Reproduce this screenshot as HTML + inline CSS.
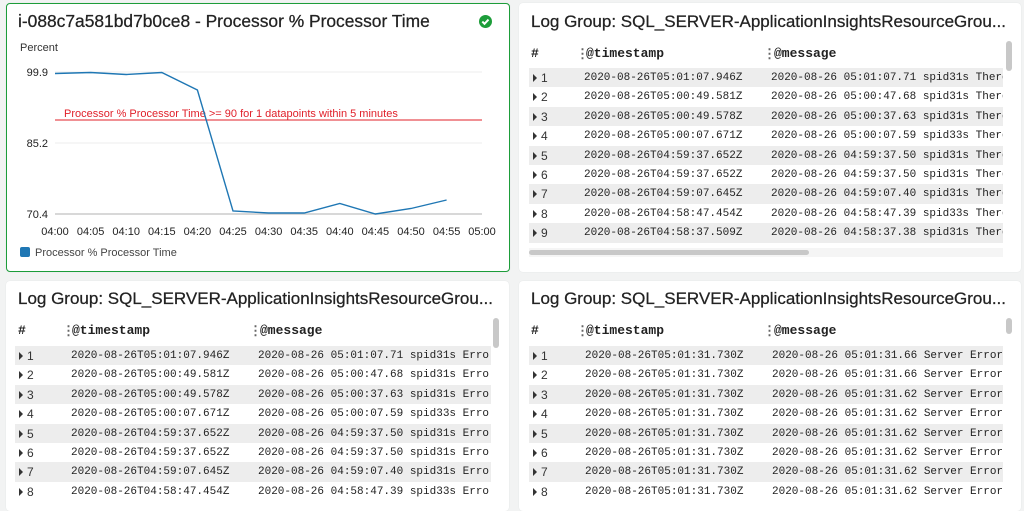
<!DOCTYPE html>
<html><head><style>
*{margin:0;padding:0;box-sizing:border-box}
body{width:1024px;height:505px;background:#f2f3f3;position:relative;overflow:hidden;font-family:"Liberation Sans",sans-serif;color:#16191f}
.p{position:absolute;background:#fff;border-radius:4px;box-shadow:0 0 1px #d5dbdb}
.t{position:absolute;font-size:17px;color:#222;white-space:nowrap;-webkit-text-stroke:0.25px #222}
.tb{position:absolute;overflow:hidden;font-family:"Liberation Mono",monospace;font-size:11px;color:#222}
.r{position:absolute;left:0;height:19.4px;width:100%}
.r.g{background:#ededed}
.r span{position:absolute;top:4px;white-space:nowrap}
.r span.n{font-family:"Liberation Sans",sans-serif;font-size:12px;top:3px;color:#333}
.h{position:absolute;font-weight:bold;font-size:13px;white-space:nowrap;font-family:"Liberation Mono",monospace;color:#222}
.d{position:absolute;font-weight:bold;font-size:13px;color:#666}
.ar{display:inline-block;width:0;height:0;border-left:4px solid #333;border-top:4px solid transparent;border-bottom:4px solid transparent;margin-right:4px;vertical-align:0px}
</style></head><body>

<div class="p" style="left:6px;top:3px;width:504px;height:269px;border:1.5px solid #1d9d3a"></div>
<div class="t" style="left:18px;top:11px;font-size:17.4px">i-088c7a581bd7b0ce8 - Processor % Processor Time</div>
<svg style="position:absolute;left:478px;top:14px" width="15" height="15"><circle cx="7.5" cy="7.5" r="6.5" fill="#1d9d3a"/><path d="M4.3 7.6l2.2 2.2 4-4.2" stroke="#fff" stroke-width="2" fill="none"/></svg>
<svg style="position:absolute;left:0;top:0" width="512" height="270" font-family="Liberation Sans" font-size="11">
<text x="20" y="51" fill="#333" font-size="11">Percent</text>
<line x1="55" y1="72" x2="482" y2="72" stroke="#eee"/>
<line x1="55" y1="143" x2="482" y2="143" stroke="#eee"/>
<line x1="55" y1="214" x2="482" y2="214" stroke="#ccc" stroke-width="1.5"/>
<text x="48" y="76" text-anchor="end" fill="#222">99.9</text>
<text x="48" y="147" text-anchor="end" fill="#222">85.2</text>
<text x="48" y="218" text-anchor="end" fill="#222">70.4</text>
<line x1="55" y1="120" x2="482" y2="120" stroke="#e0202a" stroke-width="1"/>
<text x="64" y="117" fill="#e0202a">Processor % Processor Time &gt;= 90 for 1 datapoints within 5 minutes</text>
<polyline fill="none" stroke="#1f77b4" stroke-width="1.4" points="55,73.5 90.6,72.5 126.2,74.5 161.8,72.5 197.4,90 233,211 268.6,213 304.2,213 339.8,203.5 375.4,214 411,208.5 446.6,200"/>
<g fill="#222" text-anchor="middle">
<text x="55" y="235">04:00</text><text x="90.6" y="235">04:05</text><text x="126.2" y="235">04:10</text><text x="161.8" y="235">04:15</text><text x="197.4" y="235">04:20</text><text x="233" y="235">04:25</text><text x="268.6" y="235">04:30</text><text x="304.2" y="235">04:35</text><text x="339.8" y="235">04:40</text><text x="375.4" y="235">04:45</text><text x="411" y="235">04:50</text><text x="446.6" y="235">04:55</text><text x="482" y="235">05:00</text>
</g>
<rect x="20" y="247" width="10" height="10" rx="2" fill="#1f77b4"/>
<text x="35" y="256" fill="#444">Processor % Processor Time</text>
</svg>

<div class="p" style="left:519px;top:3px;width:502px;height:269px"></div>
<div class="p" style="left:6px;top:281px;width:503px;height:230px"></div>
<div class="p" style="left:519px;top:281px;width:502px;height:230px"></div>

<div class="t" style="left:531px;top:12px">Log Group: SQL_SERVER-ApplicationInsightsResourceGrou...</div>
<div class="t" style="left:18px;top:289px">Log Group: SQL_SERVER-ApplicationInsightsResourceGrou...</div>
<div class="t" style="left:531px;top:289px">Log Group: SQL_SERVER-ApplicationInsightsResourceGrou...</div>

<!-- top right table -->
<div class="h" style="left:531px;top:46px">#</div>
<div class="d" style="left:576px;top:46px">&#8942;</div>
<div class="h" style="left:586px;top:46px">@timestamp</div>
<div class="d" style="left:763px;top:46px">&#8942;</div>
<div class="h" style="left:774px;top:46px">@message</div>
<div style="position:absolute;left:1006px;top:41px;width:6px;height:30px;background:#c8c8c8;border-radius:3px"></div>
<div style="position:absolute;left:529px;top:248px;width:474px;height:9px;background:#f5f5f5"></div>
<div style="position:absolute;left:529px;top:250px;width:280px;height:5px;background:#c8c8c8;border-radius:3px"></div>
<div class="tb" style="left:529px;top:68px;width:474px;height:178px">
<div class="r g" style="top:0"><span class="n" style="left:4px"><i class="ar"></i>1</span><span style="left:55px">2020-08-26T05:01:07.946Z</span><span style="left:242px">2020-08-26 05:01:07.71 spid31s There</span></div>
<div class="r" style="top:19.4px"><span class="n" style="left:4px"><i class="ar"></i>2</span><span style="left:55px">2020-08-26T05:00:49.581Z</span><span style="left:242px">2020-08-26 05:00:47.68 spid31s There</span></div>
<div class="r g" style="top:38.8px"><span class="n" style="left:4px"><i class="ar"></i>3</span><span style="left:55px">2020-08-26T05:00:49.578Z</span><span style="left:242px">2020-08-26 05:00:37.63 spid31s There</span></div>
<div class="r" style="top:58.2px"><span class="n" style="left:4px"><i class="ar"></i>4</span><span style="left:55px">2020-08-26T05:00:07.671Z</span><span style="left:242px">2020-08-26 05:00:07.59 spid33s There</span></div>
<div class="r g" style="top:77.6px"><span class="n" style="left:4px"><i class="ar"></i>5</span><span style="left:55px">2020-08-26T04:59:37.652Z</span><span style="left:242px">2020-08-26 04:59:37.50 spid31s There</span></div>
<div class="r" style="top:97px"><span class="n" style="left:4px"><i class="ar"></i>6</span><span style="left:55px">2020-08-26T04:59:37.652Z</span><span style="left:242px">2020-08-26 04:59:37.50 spid31s There</span></div>
<div class="r g" style="top:116.4px"><span class="n" style="left:4px"><i class="ar"></i>7</span><span style="left:55px">2020-08-26T04:59:07.645Z</span><span style="left:242px">2020-08-26 04:59:07.40 spid31s There</span></div>
<div class="r" style="top:135.8px"><span class="n" style="left:4px"><i class="ar"></i>8</span><span style="left:55px">2020-08-26T04:58:47.454Z</span><span style="left:242px">2020-08-26 04:58:47.39 spid33s There</span></div>
<div class="r g" style="top:155.2px"><span class="n" style="left:4px"><i class="ar"></i>9</span><span style="left:55px">2020-08-26T04:58:37.509Z</span><span style="left:242px">2020-08-26 04:58:37.38 spid31s There</span></div>
</div>

<!-- bottom left -->
<div class="h" style="left:18px;top:323px">#</div>
<div class="d" style="left:62px;top:323px">&#8942;</div>
<div class="h" style="left:72px;top:323px">@timestamp</div>
<div class="d" style="left:249px;top:323px">&#8942;</div>
<div class="h" style="left:260px;top:323px">@message</div>
<div style="position:absolute;left:493px;top:318px;width:6px;height:30px;background:#c8c8c8;border-radius:3px"></div>
<div class="tb" style="left:15px;top:346px;width:476px;height:159px">
<div class="r g" style="top:0"><span class="n" style="left:4px"><i class="ar"></i>1</span><span style="left:56px">2020-08-26T05:01:07.946Z</span><span style="left:243px">2020-08-26 05:01:07.71 spid31s Erro</span></div>
<div class="r" style="top:19.4px"><span class="n" style="left:4px"><i class="ar"></i>2</span><span style="left:56px">2020-08-26T05:00:49.581Z</span><span style="left:243px">2020-08-26 05:00:47.68 spid31s Erro</span></div>
<div class="r g" style="top:38.8px"><span class="n" style="left:4px"><i class="ar"></i>3</span><span style="left:56px">2020-08-26T05:00:49.578Z</span><span style="left:243px">2020-08-26 05:00:37.63 spid31s Erro</span></div>
<div class="r" style="top:58.2px"><span class="n" style="left:4px"><i class="ar"></i>4</span><span style="left:56px">2020-08-26T05:00:07.671Z</span><span style="left:243px">2020-08-26 05:00:07.59 spid33s Erro</span></div>
<div class="r g" style="top:77.6px"><span class="n" style="left:4px"><i class="ar"></i>5</span><span style="left:56px">2020-08-26T04:59:37.652Z</span><span style="left:243px">2020-08-26 04:59:37.50 spid31s Erro</span></div>
<div class="r" style="top:97px"><span class="n" style="left:4px"><i class="ar"></i>6</span><span style="left:56px">2020-08-26T04:59:37.652Z</span><span style="left:243px">2020-08-26 04:59:37.50 spid31s Erro</span></div>
<div class="r g" style="top:116.4px"><span class="n" style="left:4px"><i class="ar"></i>7</span><span style="left:56px">2020-08-26T04:59:07.645Z</span><span style="left:243px">2020-08-26 04:59:07.40 spid31s Erro</span></div>
<div class="r" style="top:135.8px"><span class="n" style="left:4px"><i class="ar"></i>8</span><span style="left:56px">2020-08-26T04:58:47.454Z</span><span style="left:243px">2020-08-26 04:58:47.39 spid33s Erro</span></div>
</div>

<!-- bottom right -->
<div class="h" style="left:531px;top:323px">#</div>
<div class="d" style="left:576px;top:323px">&#8942;</div>
<div class="h" style="left:586px;top:323px">@timestamp</div>
<div class="d" style="left:763px;top:323px">&#8942;</div>
<div class="h" style="left:774px;top:323px">@message</div>
<div style="position:absolute;left:1006px;top:318px;width:6px;height:16px;background:#c8c8c8;border-radius:3px"></div>
<div class="tb" style="left:529px;top:346px;width:474px;height:159px">
<div class="r g" style="top:0"><span class="n" style="left:4px"><i class="ar"></i>1</span><span style="left:56px">2020-08-26T05:01:31.730Z</span><span style="left:243px">2020-08-26 05:01:31.66 Server Error</span></div>
<div class="r" style="top:19.4px"><span class="n" style="left:4px"><i class="ar"></i>2</span><span style="left:56px">2020-08-26T05:01:31.730Z</span><span style="left:243px">2020-08-26 05:01:31.66 Server Error</span></div>
<div class="r g" style="top:38.8px"><span class="n" style="left:4px"><i class="ar"></i>3</span><span style="left:56px">2020-08-26T05:01:31.730Z</span><span style="left:243px">2020-08-26 05:01:31.62 Server Error</span></div>
<div class="r" style="top:58.2px"><span class="n" style="left:4px"><i class="ar"></i>4</span><span style="left:56px">2020-08-26T05:01:31.730Z</span><span style="left:243px">2020-08-26 05:01:31.62 Server Error</span></div>
<div class="r g" style="top:77.6px"><span class="n" style="left:4px"><i class="ar"></i>5</span><span style="left:56px">2020-08-26T05:01:31.730Z</span><span style="left:243px">2020-08-26 05:01:31.62 Server Error</span></div>
<div class="r" style="top:97px"><span class="n" style="left:4px"><i class="ar"></i>6</span><span style="left:56px">2020-08-26T05:01:31.730Z</span><span style="left:243px">2020-08-26 05:01:31.62 Server Error</span></div>
<div class="r g" style="top:116.4px"><span class="n" style="left:4px"><i class="ar"></i>7</span><span style="left:56px">2020-08-26T05:01:31.730Z</span><span style="left:243px">2020-08-26 05:01:31.62 Server Error</span></div>
<div class="r" style="top:135.8px"><span class="n" style="left:4px"><i class="ar"></i>8</span><span style="left:56px">2020-08-26T05:01:31.730Z</span><span style="left:243px">2020-08-26 05:01:31.62 Server Error</span></div>
</div>
</body></html>
